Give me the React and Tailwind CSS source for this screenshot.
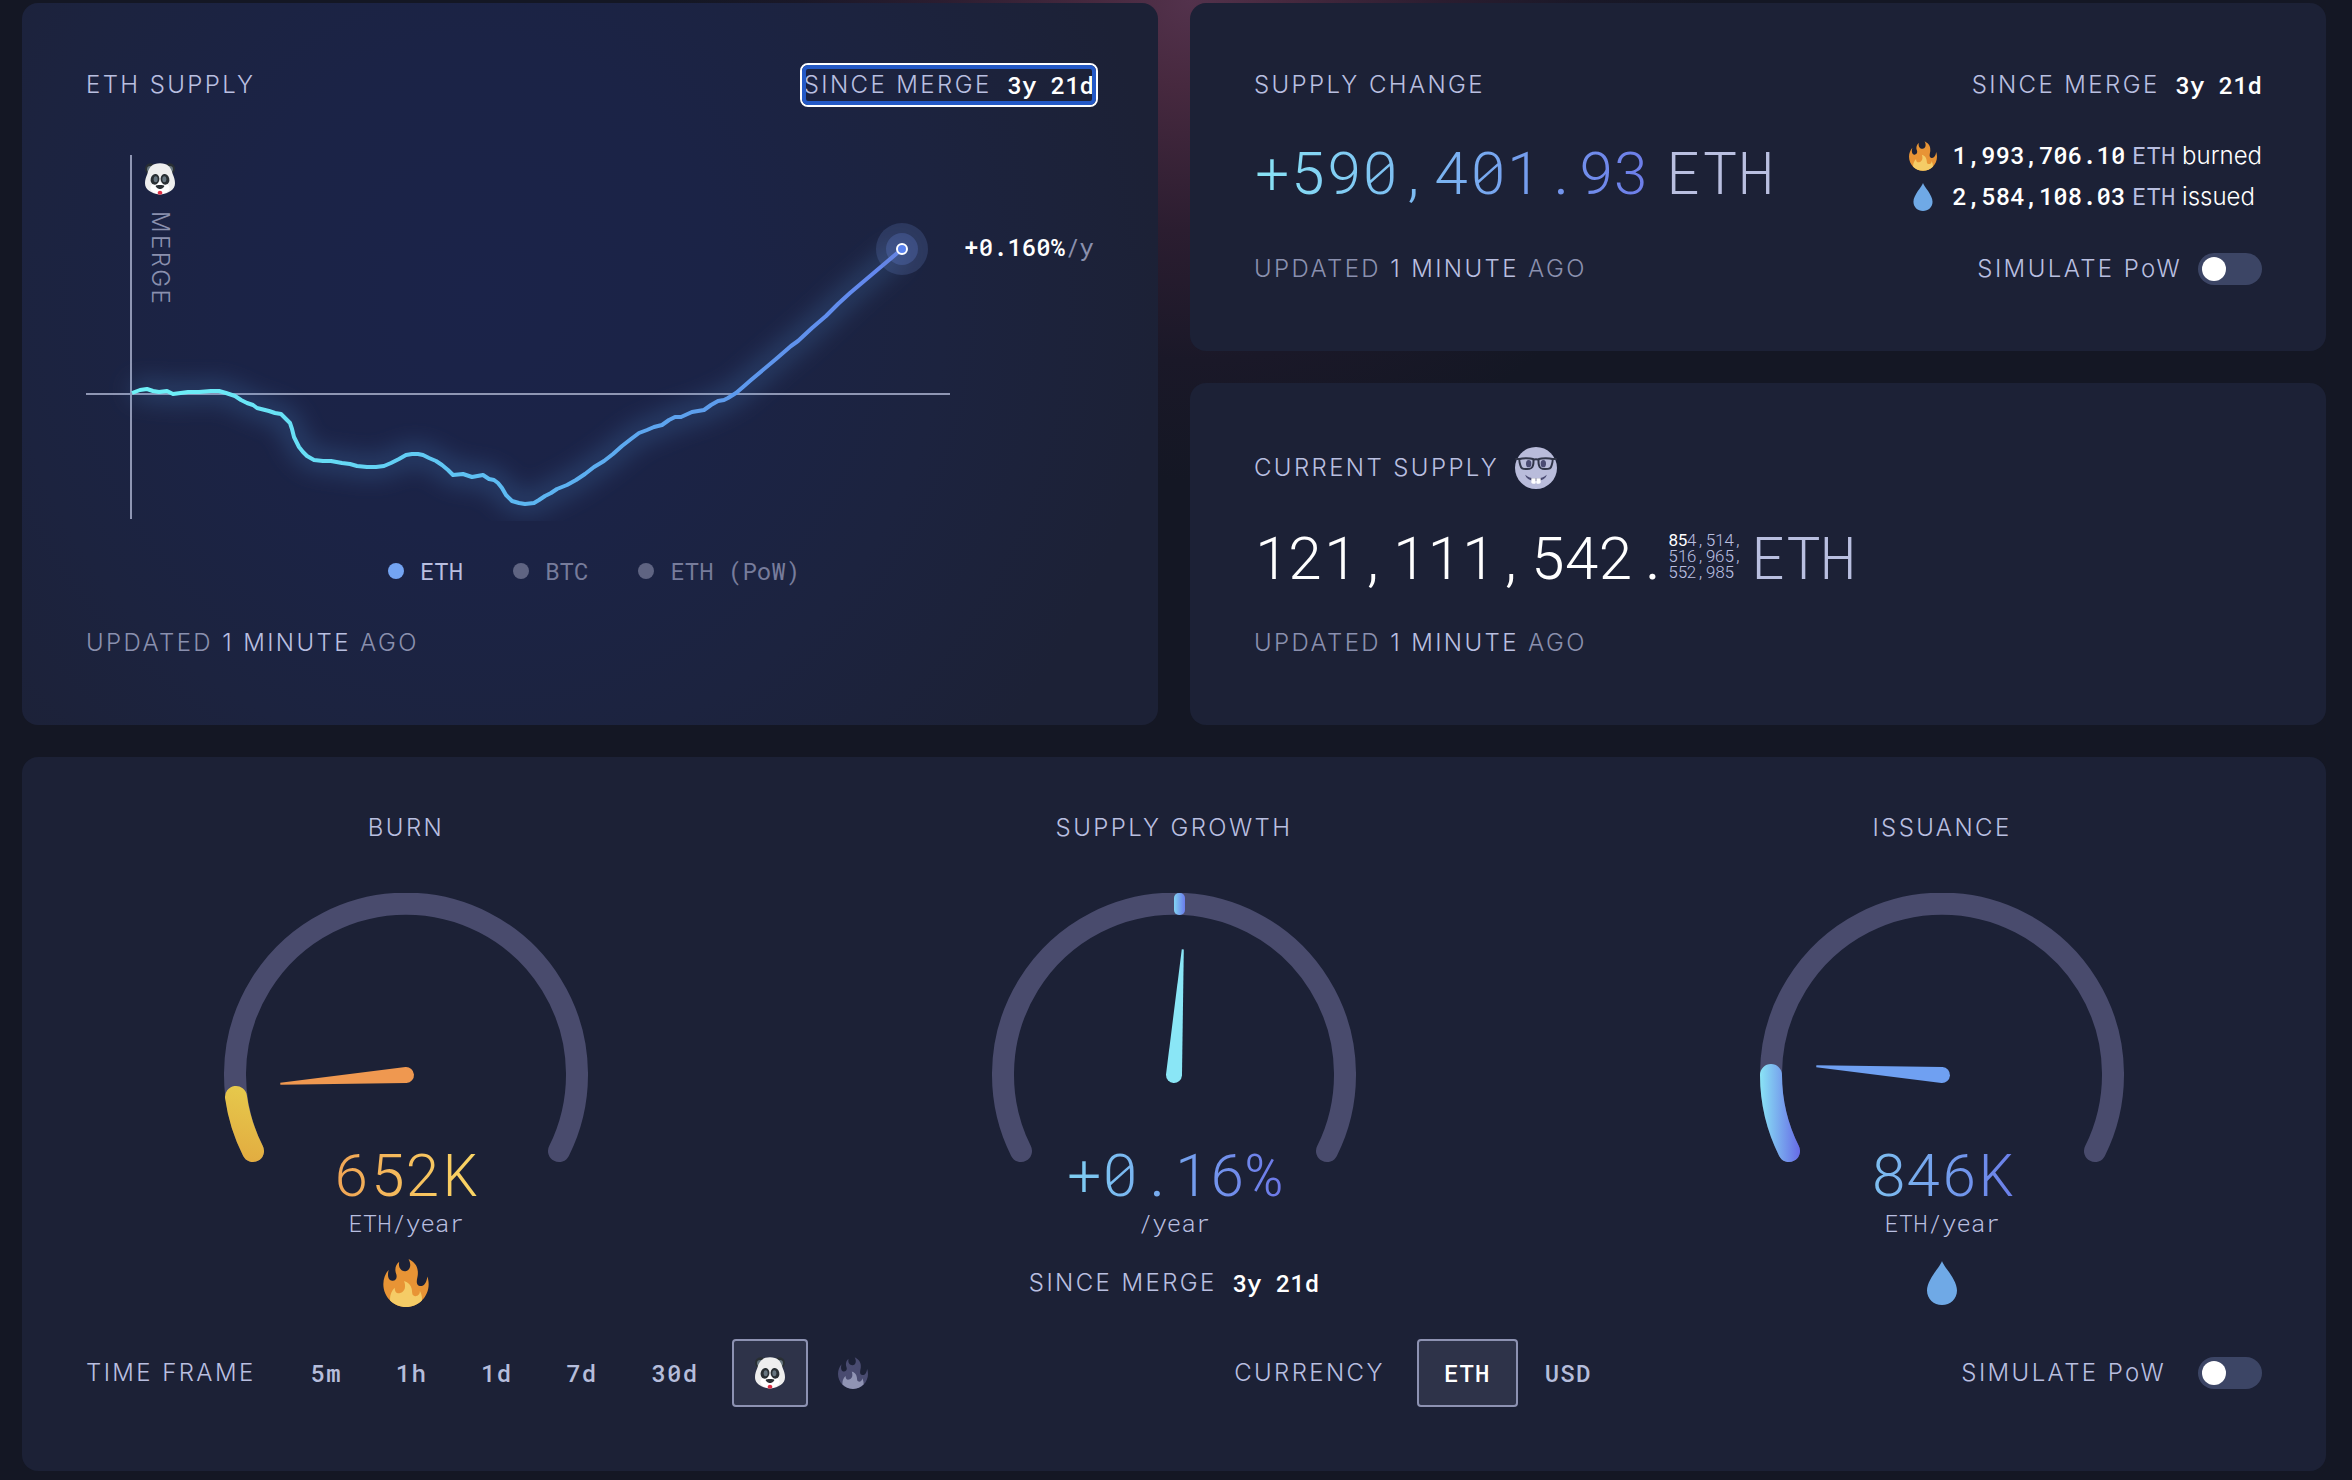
import { useId } from "react";

const mono = "font-['Roboto_Mono','Liberation_Mono',monospace]";

function Card({ className = "", children }) {
  return (
    <section className={`flex flex-col rounded-2xl bg-[#1c2136] ${className}`}>
      {children}
    </section>
  );
}

function Label({ as: Tag = "h2", className = "", children }) {
  return (
    <Tag className={`font-light tracking-widest text-[#b9bfe0] ${className}`}>
      {children}
    </Tag>
  );
}

function Updated({ className = "" }) {
  return (
    <p className={`font-light tracking-widest text-[#8a90ae] ${className}`}>
      UPDATED <span className="text-[#b9bfe0]">1 MINUTE</span> AGO
    </p>
  );
}

function SinceMerge() {
  return (
    <span className="flex items-center gap-4">
      <span className="font-light tracking-widest text-[#b9bfe0]">
        SINCE MERGE
      </span>
      <span className={`${mono} font-medium text-white`}>3y 21d</span>
    </span>
  );
}

function SimulatePow({ id, className = "" }) {
  return (
    <div className={`flex items-center ${className}`}>
      <label
        htmlFor={id}
        className="font-light tracking-widest text-[#b9bfe0]"
      >
        SIMULATE PoW
      </label>
      <input
        id={id}
        type="checkbox"
        role="switch"
        className="relative h-8 w-16 cursor-pointer appearance-none rounded-full bg-[#3c4565] before:absolute before:top-1 before:left-1 before:size-6 before:rounded-full before:bg-white checked:before:left-9"
      />
    </div>
  );
}

function Flame({ className, outer = "#e89435", inner = "#f5cc66" }) {
  return (
    <svg viewBox="1 0 34 36" className={className} aria-hidden="true">
      <path
        fill={outer}
        d="M35 19c0-2.062-.367-4.039-1.04-5.868-.46 5.389-3.333 8.157-6.335 6.868-2.812-1.208-.917-5.917-.777-8.164.236-3.809-.012-8.169-6.931-11.794 2.875 5.5.333 8.917-2.333 9.125-2.958.231-5.667-2.542-4.667-7.042-3.238 2.386-3.332 6.402-2.333 9 1.042 2.708-.042 4.958-2.583 5.208-2.84.28-4.418-3.041-2.963-8.333C2.52 10.965 1 14.805 1 19c0 9.389 7.611 17 17 17s17-7.611 17-17z"
      />
      <path
        fill={inner}
        d="M28.394 23.999c.148 3.084-2.561 4.293-4.019 3.709-2.106-.843-1.541-2.291-2.083-5.291s-2.625-5.083-5.708-6c2.25 6.333-1.247 8.667-3.08 9.084-1.872.426-3.753-.001-3.968-4.007C7.352 23.668 6 26.676 6 30c0 .368.023.73.055 1.09C9.125 34.124 13.342 36 18 36s8.875-1.876 11.945-4.91c.032-.36.055-.722.055-1.09 0-2.187-.584-4.236-1.606-6.001z"
      />
    </svg>
  );
}

function Drop({ className }) {
  return (
    <svg viewBox="0 0 30 44" className={className} aria-hidden="true">
      <path
        fill="#6fa9e6"
        d="M15 0c1.500 5.500 15 18.500 15 29.500C30 38 23.300 44 15 44S0 38 0 29.500C0 18.500 13.500 5.500 15 0z"
      />
    </svg>
  );
}

function PandaShapes() {
  return (
    <>
      <circle cx="16" cy="16" r="16" fill="#292f33" />
      <circle cx="74" cy="16" r="16" fill="#292f33" />
      <circle cx="16" cy="18" r="10" fill="#66757f" />
      <circle cx="74" cy="18" r="10" fill="#66757f" />
      <path
        fill="#eeeeee"
        d="M45 0C22 0 12 12 7 32 3 42 0 48 0 60c0 19 17 30 45 34 28-4 45-15 45-34 0-12-3-18-7-28C78 12 68 0 45 0z"
      />
      <ellipse cx="45" cy="74" rx="29" ry="18" fill="#ffffff" />
      <ellipse cx="30" cy="48" rx="13" ry="16" fill="#292f33" transform="rotate(12 30 48)" />
      <ellipse cx="60" cy="48" rx="13" ry="16" fill="#292f33" transform="rotate(-12 60 48)" />
      <ellipse cx="32" cy="48" rx="6" ry="9" fill="#66757f" />
      <ellipse cx="58" cy="48" rx="6" ry="9" fill="#66757f" />
      <path fill="#292f33" d="M32 68c0-4 26-4 26 0s-8 9-13 9-13-5-13-9z" />
      <path fill="#dd2e44" d="M38 89c0-5 4-7 7-7s7 2 7 7c0 3-4 5-7 5s-7-2-7-5z" />
    </>
  );
}

function Panda({ className }) {
  return (
    <svg viewBox="0 0 90 94" className={className} role="img" aria-label="Since merge">
      <PandaShapes />
    </svg>
  );
}

function NerdFace({ className }) {
  return (
    <svg viewBox="0 0 126 126" className={className} aria-hidden="true">
      <circle cx="63" cy="63" r="63" fill="#b9bcdb" />
      <ellipse cx="41" cy="50" rx="8" ry="11" fill="#4a4b72" />
      <ellipse cx="85" cy="50" rx="8" ry="11" fill="#4a4b72" />
      <g fill="none" stroke="#303548" strokeWidth="6" strokeLinejoin="round">
        <path d="M14 36c8-3 32-3 40 0 2 1 2 12 0 19-2 9-6 11-18 11-14 0-18-2-20-11-2-7-3-18-2-19z" />
        <path d="M112 36c-8-3-32-3-40 0-2 1-2 12 0 19 2 9 6 11 18 11 14 0 18-2 20-11 2-7 3-18 2-19z" />
        <path d="M1 36h13M112 36h13" />
        <path d="M54 39c4-3 14-3 18 0" />
      </g>
      <path
        d="M31 83c6 7 18 11 32 11s26-4 32-11c-1 11-15 19-32 19S32 94 31 83z"
        fill="#4a4b72"
      />
      <path d="M49 94h13v13c0 2-2 3-4 3h-4c-3 0-5-2-5-5z" fill="#ffffff" />
      <path d="M64 94h13v11c0 3-2 5-5 5h-4c-2 0-4-1-4-3z" fill="#ffffff" />
    </svg>
  );
}

const supplyLine =
  "M46 243 L54 240 L61 239 L67 241 L73 242 L81 241 L87 244 L102 242 L113 242 L125 241 L133 241 L140 243 L149 246 L155 250 L161 253 L167 255 L171 258 L183 261 L189 263 L195 264 L200 269 L204 273 L206 279 L208 287 L213 297 L217 302 L221 306 L228 310 L237 311 L245 311 L256 313 L264 314 L271 316 L281 317 L290 317 L298 316 L305 313 L313 309 L320 305 L326 304 L332 304 L337 305 L343 308 L350 311 L356 315 L362 320 L367 325 L377 324 L386 327 L397 325 L403 329 L408 330 L412 333 L416 338 L420 345 L426 351 L433 353 L439 354 L448 353 L453 350 L459 346 L465 343 L471 339 L481 335 L490 330 L499 324 L508 317 L518 311 L527 304 L536 296 L545 289 L553 283 L561 280 L568 277 L576 275 L583 270 L589 267 L595 267 L606 262 L618 260 L625 255 L632 251 L638 250 L642 248 L650 243 L657 237 L665 230 L690 209 L705 196 L712 191 L726 178 L740 166 L752 154 L764 143 L790 121 L816 99";

function SupplyChart() {
  return (
    <svg
      viewBox="0 1 1008 370"
      className="mt-12 block h-auto w-full overflow-visible"
      role="img"
      aria-label="ETH supply since the merge"
    >
      <defs>
        <linearGradient id="supply-line" gradientUnits="userSpaceOnUse" x1="46" y1="0" x2="815" y2="0">
          <stop offset="0" stopColor="#6ff3f8" />
          <stop offset="0.25" stopColor="#66dcf5" />
          <stop offset="0.5" stopColor="#5cb8f2" />
          <stop offset="0.8" stopColor="#5d98ec" />
          <stop offset="1" stopColor="#6484ee" />
        </linearGradient>
        <filter id="supply-glow" filterUnits="userSpaceOnUse" x="0" y="60" width="900" height="311">
          <feGaussianBlur stdDeviation="13" />
        </filter>
      </defs>
      <path d="M0 244H864" stroke="#8f96b3" strokeWidth="2" />
      <path d="M45 5V369" stroke="#8f96b3" strokeWidth="2" />
      <path d={supplyLine} fill="none" stroke="#5596dc" strokeWidth="12" opacity="0.42" filter="url(#supply-glow)" />
      <path d={supplyLine} fill="none" stroke="url(#supply-line)" strokeWidth="4" strokeLinejoin="round" />
      <circle cx="816" cy="99" r="26" fill="#6a86c8" opacity="0.22" />
      <circle cx="816" cy="99" r="16" fill="#6a86e0" opacity="0.26" />
      <circle cx="816" cy="99" r="5" fill="#5a82ee" stroke="#ffffff" strokeWidth="2" />
      <svg x="59" y="13" width="30" height="32" viewBox="0 0 90 94">
        <PandaShapes />
      </svg>
      <text
        transform="translate(66 61) rotate(90)"
        className="fill-[#8a90ae] text-2xl font-light tracking-widest"
      >
        MERGE
      </text>
      <text x="1008" y="106" textAnchor="end" className={`${mono} fill-white text-2xl font-medium`}>
        +0.160%<tspan className="fill-[#8a90ae] font-normal">/y</tspan>
      </text>
    </svg>
  );
}

function LegendItem({ dot, text, children }) {
  return (
    <button type="button" className="flex items-center gap-4">
      <span className={`size-4 rounded-full ${dot}`} />
      <span className={`${mono} ${text}`}>{children}</span>
    </button>
  );
}

function Needle({ angle, color }) {
  return (
    <path
      d="M174 182L181 56H183L190 182A8 8 0 0 1 174 182Z"
      fill={color}
      transform={`rotate(${angle} 182 182)`}
    />
  );
}

function Gauge({ label, title, needle, angle, colors, arc, arcGradient, value, valueClass, unit, children }) {
  const id = useId();
  return (
    <div className="flex flex-col items-center">
      <Label className="leading-9">{title}</Label>
      <svg viewBox="0 0 364 270" className="mt-[47px] h-[270px] w-[364px]" role="img" aria-label={label}>
        <defs>
          <linearGradient id={id} gradientUnits="userSpaceOnUse" {...arcGradient}>
            <stop offset="0" stopColor={colors[0]} />
            <stop offset="1" stopColor={colors[1]} />
          </linearGradient>
        </defs>
        <path
          d="M29 258A171 171 0 1 1 335 258"
          fill="none"
          stroke="#494b6d"
          strokeWidth="22"
          strokeLinecap="round"
        />
        {arc ? (
          <path d={arc} fill="none" stroke={`url(#${id})`} strokeWidth="22" strokeLinecap="round" />
        ) : (
          <rect x="182" y="0" width="11" height="22" rx="5" fill={`url(#${id})`} />
        )}
        <Needle angle={angle} color={needle} />
      </svg>
      <p className={`-mt-[26px] bg-clip-text text-6xl leading-[72px] font-light text-transparent ${mono} ${valueClass}`}>
        {value}
      </p>
      <p className={`leading-7 font-light text-[#b9bfe0] ${mono}`}>{unit}</p>
      <div className="mt-[22px] flex h-12 items-center">{children}</div>
    </div>
  );
}

function OptionButton({ selected = false, className = "", children, ...rest }) {
  return (
    <button
      type="button"
      aria-pressed={selected}
      className={`flex h-[68px] items-center justify-center rounded border-2 font-medium tracking-wider ${mono} ${
        selected ? "border-[#8d92b2] bg-[#2e3349] text-white" : "border-transparent text-[#b5bddb]"
      } ${className}`}
      {...rest}
    >
      {children}
    </button>
  );
}

export default function App() {
  return (
    <main className="flex min-h-screen flex-col gap-8 bg-[#141724] bg-[radial-gradient(ellipse_520px_480px_at_1190px_0px,#53324c_0%,#47293f_18%,#2b1d30_48%,#1a1828_75%,transparent_100%)] bg-no-repeat pt-[3px] pr-[26px] pb-[9px] pl-[22px] font-['Inter',sans-serif] text-2xl leading-9 text-white">
      <div className="grid grid-cols-2 gap-8">
        <Card className="bg-[radial-gradient(circle_at_40%_40%,#1b2349_0%,#1b2346_30%,#1c233f_58%,#1c2136_85%)] p-16">
          <div className="flex items-center justify-between">
            <Label>ETH SUPPLY</Label>
            <button
              type="button"
              className="relative rounded outline-2 outline-offset-2 outline-white after:absolute after:-inset-[2px] after:rounded-md after:border-4 after:border-[#2459c6]"
            >
              <SinceMerge />
            </button>
          </div>
          <SupplyChart />
          <div className="mt-8 flex justify-center gap-[50px] pl-2">
            <LegendItem dot="bg-[#74a4f2]" text="text-[#b9bfe0]">ETH</LegendItem>
            <LegendItem dot="bg-[#5f6482]" text="text-[#777c9b]">BTC</LegendItem>
            <LegendItem dot="bg-[#5f6482]" text="text-[#777c9b]">ETH (PoW)</LegendItem>
          </div>
          <Updated className="mt-auto" />
        </Card>

        <div className="flex flex-col gap-8">
          <Card className="p-16">
            <div className="flex items-center justify-between">
              <Label>SUPPLY CHANGE</Label>
              <SinceMerge />
            </div>
            <div className="mt-8 flex items-start justify-between">
              <p className={`flex gap-4 text-6xl leading-[72px] font-light ${mono}`}>
                <span className="bg-linear-to-r from-[#88e4f5] to-[#6d7ce9] bg-clip-text text-transparent">
                  +590,401.93
                </span>
                <span className="text-[#b9bfe0]">ETH</span>
              </p>
              <ul className="leading-[41px]">
                <li className="flex items-center">
                  <Flame className="mr-4 h-[30px] w-7" />
                  <p className="font-light">
                    <span className={`font-medium ${mono}`}>1,993,706.10</span>{" "}
                    <span className={`font-normal text-[#b9bfe0] ${mono}`}>ETH</span> burned
                  </p>
                </li>
                <li className="flex items-center">
                  <Drop className="mr-5 ml-1 h-7 w-5" />
                  <p className="font-light">
                    <span className={`font-medium ${mono}`}>2,584,108.03</span>{" "}
                    <span className={`font-normal text-[#b9bfe0] ${mono}`}>ETH</span> issued
                  </p>
                </li>
              </ul>
            </div>
            <div className="mt-[34px] flex items-center justify-between">
              <Updated />
              <SimulatePow id="simulate-pow-supply" className="gap-4" />
            </div>
          </Card>

          <Card className="p-16">
            <div className="flex items-center gap-4">
              <Label>CURRENT SUPPLY</Label>
              <NerdFace className="size-[42px]" />
            </div>
            <div className={`mt-[31px] flex items-center text-6xl leading-[72px] font-light ${mono}`}>
              <span className="tracking-tight">121,111,542.</span>
              <p className="text-[17px] leading-4 tracking-tighter text-[#b9bfe0]">
                <span className="font-normal text-white">85</span>4,514,
                <br />
                516,965,
                <br />
                552,985
              </p>
              <span className="ml-2 tracking-tight text-[#b9bfe0]">ETH</span>
            </div>
            <Updated className="mt-[33px]" />
          </Card>
        </div>
      </div>

      <Card className="pt-[53px] pb-16">
        <div className="grid grid-cols-3">
          <Gauge
            title="BURN"
            label="Burn gauge"
            needle="#ef9850"
            angle={-94}
            arc="M29 258A171 171 0 0 1 12 204"
            arcGradient={{ x1: 20, y1: 270, x2: 40, y2: 200 }}
            colors={["#e2ab40", "#e6c94c"]}
            value="652K"
            valueClass="bg-linear-to-r from-[#f0a455] to-[#fad665]"
            unit="ETH/year"
          >
            <Flame className="h-12 w-[46px]" />
          </Gauge>
          <Gauge
            title="SUPPLY GROWTH"
            label="Supply growth gauge"
            needle="#8ae6f6"
            angle={4}
            arcGradient={{ x1: 182, y1: 0, x2: 193, y2: 0 }}
            colors={["#82d4f4", "#6a7bea"]}
            value="+0.16%"
            valueClass="bg-linear-to-r from-[#7fd0f3] to-[#6d78e8]"
            unit="/year"
          >
            <SinceMerge />
          </Gauge>
          <Gauge
            title="ISSUANCE"
            label="Issuance gauge"
            needle="#6fa0f2"
            angle={-86}
            arc="M29 258A171 171 0 0 1 11 182"
            arcGradient={{ x1: 0, y1: 0, x2: 40, y2: 0 }}
            colors={["#8ae4f5", "#666ae6"]}
            value="846K"
            valueClass="bg-linear-to-r from-[#7ec0f0] to-[#6b7ee9]"
            unit="ETH/year"
          >
            <Drop className="h-11 w-[30px]" />
          </Gauge>
        </div>

        <div className="mt-8 flex items-center justify-between px-16">
          <div className="flex items-center">
            <Label as="span" className="mr-7">TIME FRAME</Label>
            <OptionButton className="px-[25px]">5m</OptionButton>
            <OptionButton className="px-[25px]">1h</OptionButton>
            <OptionButton className="px-[25px]">1d</OptionButton>
            <OptionButton className="px-[25px]">7d</OptionButton>
            <OptionButton className="px-[25px]">30d</OptionButton>
            <OptionButton selected className="mx-[7px] w-[76px]">
              <Panda className="h-8 w-[30px]" />
            </OptionButton>
            <OptionButton className="w-[76px]" aria-label="Since burn">
              <Flame className="h-8 w-[30px]" outer="#494b70" inner="#9094b4" />
            </OptionButton>
          </div>
          <div className="flex items-center">
            <Label as="span" className="mr-8">CURRENCY</Label>
            <OptionButton selected className="px-[25px]">ETH</OptionButton>
            <OptionButton className="px-[25px]">USD</OptionButton>
          </div>
          <SimulatePow id="simulate-pow-gauges" className="gap-8" />
        </div>
      </Card>
    </main>
  );
}
